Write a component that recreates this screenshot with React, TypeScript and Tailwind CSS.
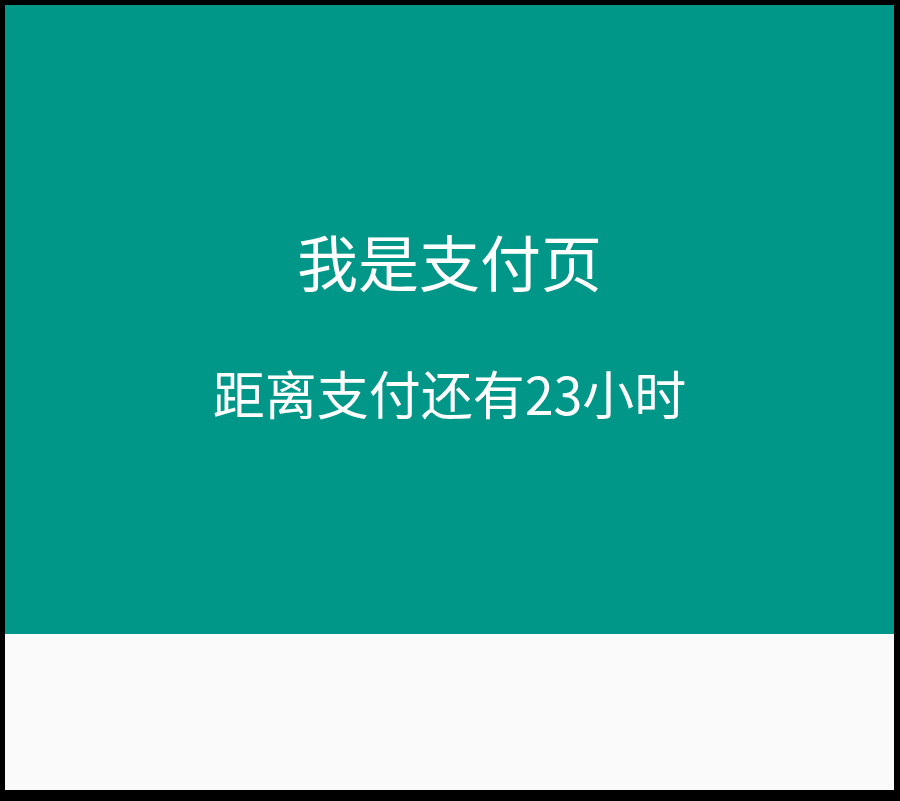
export default function App() {
  return (
    <div className="w-[900px] h-[801px] bg-black pl-[5px] pt-[5px] pr-[6px] pb-[11px] flex">
      <div className="flex-1 flex flex-col bg-[#fafafa]">
        {/* payment banner */}
        <div
          className="h-[629px] bg-[#009688] flex flex-col items-center pt-[225px] text-white"
          style={{ fontFamily: '"Noto Sans CJK SC", "Noto Sans", sans-serif' }}
        >
          <h1 className="text-[61px] leading-none font-normal">我是支付页</h1>
          <p className="mt-[76px] text-[52px] leading-none">距离支付还有23小时</p>
        </div>
        <div className="flex-1" />
      </div>
    </div>
  );
}
